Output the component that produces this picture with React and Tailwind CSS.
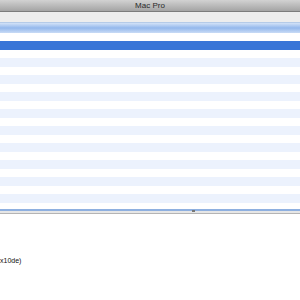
export default function App() {
  const pairs = Array.from({ length: 9 });
  return (
    <div className="w-[300px] h-[300px] bg-white overflow-hidden flex flex-col" style={{ fontFamily: '"Liberation Sans", Arial, sans-serif' }}>
      <div className="h-[12px] bg-gradient-to-b from-[#d2d2d2] to-[#a4a4a4] border-b border-[#7c7c7c] flex items-center justify-center">
        <span className="text-[8px] leading-none text-[#2a2a2a]">Mac Pro</span>
      </div>
      <div className="h-[10px] bg-[#ededed]" />
      <div className="h-[11px] bg-gradient-to-b from-[#d3e2f7] via-[#94b8ec] to-[#c9dbf5] border-t border-[#b5cbe8]" />
      <div className="h-[8px] bg-white" />
      <div className="h-[9px] bg-[#3875d7]" />
      {pairs.map((_, i) => (
        <div key={i} className="flex flex-col">
          <div className="h-[8px] bg-white" />
          <div className="h-[9px] bg-[#ecf2fd]" />
        </div>
      ))}
      <div className="h-[6px] bg-white" />
      <div className="relative h-[2px] bg-[#8eb0e0]">
        <div className="absolute left-[192px] top-[1px] w-[3px] h-[2px] bg-[#777]" />
      </div>
      <div className="h-[2px] bg-[#e6e6e6]" />
      <div className="h-[1px] bg-[#b4b4b4]" />
      <div className="h-[43px]" />
      <div className="text-[7px] leading-none text-[#111]">x10de)</div>
    </div>
  );
}
